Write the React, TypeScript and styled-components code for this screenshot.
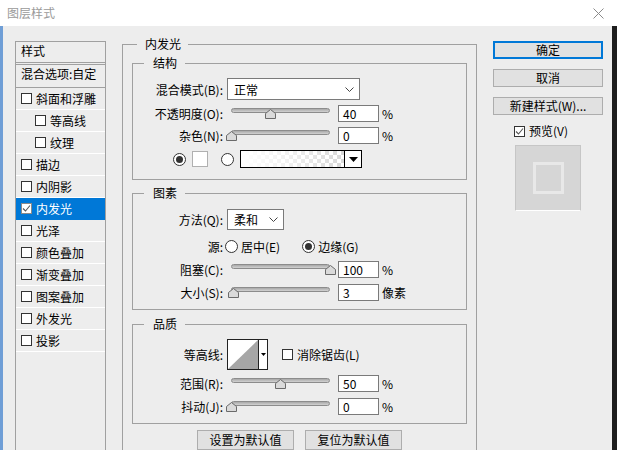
import React from "react";
import styled, { createGlobalStyle } from "styled-components";

const GlobalStyle = createGlobalStyle`
  html, body {
    margin: 0;
    padding: 0;
    background: #ededed;
    overflow: hidden;
  }
  body {
    font-family: "Noto Sans CJK SC", "Noto Sans", sans-serif;
    font-size: 12px;
    color: #000;
  }
`;

type Layer = {
  name: string;
  indent?: boolean;
  checked?: boolean;
  selected?: boolean;
};

const layers: Layer[] = [
  { name: "斜面和浮雕" },
  { name: "等高线", indent: true },
  { name: "纹理", indent: true },
  { name: "描边" },
  { name: "内阴影" },
  { name: "内发光", checked: true, selected: true },
  { name: "光泽" },
  { name: "颜色叠加" },
  { name: "渐变叠加" },
  { name: "图案叠加" },
  { name: "外发光" },
  { name: "投影" },
];

const CheckBox = ({ checked, light }: { checked?: boolean; light?: boolean }) => (
  <Box $light={light}>
    {checked && (
      <svg width="9" height="9" viewBox="0 0 9 9">
        <polyline points="1,4.5 3.5,7 8,1.5" fill="none" stroke="#555" strokeWidth="1.1" />
      </svg>
    )}
  </Box>
);

const Slider = ({ value }: { value: number }) => (
  <SliderWrap>
    <Track />
    <Thumb style={{ left: Math.round((value / 100) * 99 - 5.5) }}>
      <svg width="11" height="10" viewBox="0 0 11 10">
        <polygon points="0.5,9.5 0.5,4.5 5.5,0.5 10.5,4.5 10.5,9.5" fill="#dadada" stroke="#6a6a6a" />
      </svg>
    </Thumb>
  </SliderWrap>
);

const Chevron = () => (
  <svg width="9" height="5" viewBox="0 0 9 5">
    <polyline points="0.5,0.5 4.5,4.5 8.5,0.5" fill="none" stroke="#444" strokeWidth="1" />
  </svg>
);

const SliderRow = ({
  label,
  value,
  unit,
  mt,
}: {
  label: string;
  value: number;
  unit: string;
  mt?: number;
}) => (
  <Row $h={22} $mt={mt}>
    <Label>{label}</Label>
    <Slider value={value} />
    <NumInput>{value}</NumInput>
    <Unit>{unit}</Unit>
  </Row>
);

export default function App() {
  return (
    <Window>
      <GlobalStyle />
      <TitleBar>
        <span>图层样式</span>
        <svg width="11" height="11" viewBox="0 0 11 11">
          <path d="M0.5 0.5 L10.5 10.5 M10.5 0.5 L0.5 10.5" stroke="#8a8a8a" strokeWidth="1" />
        </svg>
      </TitleBar>
      <Body>
        <StyleList>
          <ListHeader>样式</ListHeader>
          <BlendRow>混合选项:自定</BlendRow>
          {layers.map((l) => (
            <ListItem key={l.name} $selected={l.selected} $indent={l.indent}>
              <CheckBox checked={l.checked} light={l.selected} />
              <span>{l.name}</span>
            </ListItem>
          ))}
        </StyleList>

        <MainSet>
          <MainLegend>内发光</MainLegend>

          <SubSet $mt={0} $pb={7}>
            <SubLegend>结构</SubLegend>
            <Row $h={22}>
              <Label>混合模式(B):</Label>
              <Select $w={133} $h={22}>
                <span>正常</span>
                <Chevron />
              </Select>
            </Row>
            <SliderRow label="不透明度(O):" value={40} unit="%" mt={2} />
            <SliderRow label="杂色(N):" value={0} unit="%" />
            <Row $h={26}>
              <ColorRow>
                <Radio $on />
                <Swatch />
                <Radio />
                <GradientBox>
                  <GradFill />
                  <GradArrow>
                    <svg width="9" height="5" viewBox="0 0 9 5">
                      <polygon points="0,0 9,0 4.5,5" fill="#000" />
                    </svg>
                  </GradArrow>
                </GradientBox>
              </ColorRow>
            </Row>
          </SubSet>

          <SubSet $mt={5} $pb={6}>
            <SubLegend>图素</SubLegend>
            <Row $h={22}>
              <Label>方法(Q):</Label>
              <Select $w={57} $h={21}>
                <span>柔和</span>
                <Chevron />
              </Select>
            </Row>
            <Row $h={22} $mt={5}>
              <Label>源:</Label>
              <RadioOption $gap={2}>
                <Radio />
                <span>居中(E)</span>
              </RadioOption>
              <RadioOption $gap={22}>
                <Radio $on />
                <span>边缘(G)</span>
              </RadioOption>
            </Row>
            <SliderRow label="阻塞(C):" value={100} unit="%" mt={1} />
            <SliderRow label="大小(S):" value={3} unit="像素" mt={1} />
          </SubSet>

          <SubSet $mt={6} $pb={6}>
            <SubLegend>品质</SubLegend>
            <Row $h={31}>
              <Label>等高线:</Label>
              <ContourBox>
                <svg width="30" height="29" viewBox="0 0 30 29">
                  <rect width="30" height="29" fill="#fff" />
                  <polygon points="0,29 30,0 30,29" fill="#a6a6a6" />
                </svg>
                <ContourArrow>
                  <svg width="5" height="3" viewBox="0 0 5 3">
                    <polygon points="0,0 5,0 2.5,3" fill="#000" />
                  </svg>
                </ContourArrow>
              </ContourBox>
              <AntiAlias>
                <CheckBox />
                <span>消除锯齿(L)</span>
              </AntiAlias>
            </Row>
            <SliderRow label="范围(R):" value={50} unit="%" mt={2} />
            <SliderRow label="抖动(J):" value={0} unit="%" mt={1} />
          </SubSet>

          <DefaultRow>
            <PlainButton>设置为默认值</PlainButton>
            <PlainButton>复位为默认值</PlainButton>
          </DefaultRow>
        </MainSet>

        <Side>
          <DlgButton $primary>确定</DlgButton>
          <DlgButton>取消</DlgButton>
          <DlgButton>新建样式(W)...</DlgButton>
          <PreviewCheck>
            <CheckBox checked />
            <span>预览(V)</span>
          </PreviewCheck>
          <Preview>
            <PreviewRing />
          </Preview>
        </Side>
      </Body>
    </Window>
  );
}

const Window = styled.div`
  width: 617px;
  height: 450px;
  display: flex;
  flex-direction: column;
  overflow: hidden;
`;

const TitleBar = styled.div`
  height: 26px;
  flex-shrink: 0;
  background: #fff;
  color: #9a9a9a;
  display: flex;
  align-items: center;
  justify-content: space-between;
  padding: 0 13px 0 7px;
  line-height: 16px;
`;

const Body = styled.div`
  flex: 1;
  display: flex;
  align-items: flex-start;
  background: #ededed;
  border-left: 3px solid #6f9ed6;
  border-right: 5px solid #1e1e1e;
  overflow: hidden;
`;

const StyleList = styled.div`
  margin: 15px 0 0 12px;
  width: 91px;
  height: 430px;
  flex-shrink: 0;
  box-sizing: border-box;
  border: 1px solid #a0a0a0;
`;

const ListHeader = styled.div`
  height: 20px;
  line-height: 18px;
  padding-left: 5px;
  border-bottom: 3px double #a0a0a0;
`;

const BlendRow = styled.div`
  height: 22px;
  line-height: 18px;
  padding-left: 5px;
  white-space: nowrap;
  border-bottom: 1px solid #a0a0a0;
`;

const ListItem = styled.div<{ $selected?: boolean; $indent?: boolean }>`
  height: 21px;
  display: flex;
  align-items: center;
  gap: 4px;
  padding-left: ${(p) => (p.$indent ? 19 : 5)}px;
  white-space: nowrap;
  background: ${(p) => (p.$selected ? "#0078d7" : "transparent")};
  color: ${(p) => (p.$selected ? "#fff" : "#000")};
  border-bottom: 1px solid ${(p) => (p.$selected ? "#0078d7" : "#fff")};
`;

const Box = styled.span<{ $light?: boolean }>`
  width: 11px;
  height: 11px;
  box-sizing: border-box;
  flex-shrink: 0;
  border: 1px solid ${(p) => (p.$light ? "#8a8a8a" : "#333")};
  background: #fff;
  display: inline-flex;
  align-items: center;
  justify-content: center;
`;

const MainSet = styled.fieldset`
  margin: 10px 0 0 16px;
  width: 355px;
  flex-shrink: 0;
  min-width: 0;
  box-sizing: border-box;
  border: 1px solid #a0a0a0;
  padding: 3px 9px 20px;
`;

const MainLegend = styled.legend`
  margin-left: 5px;
  padding: 0 7px 0 8px;
  line-height: 16px;
`;

const SubSet = styled.fieldset<{ $mt: number; $pb: number }>`
  margin: ${(p) => p.$mt}px 0 0;
  min-width: 0;
  border: 1px solid #a0a0a0;
  padding: 7px 0 ${(p) => p.$pb}px;
`;

const SubLegend = styled.legend`
  margin-left: 11px;
  padding: 0 8px 0 9px;
  line-height: 16px;
`;

const Row = styled.div<{ $h: number; $mt?: number }>`
  display: flex;
  align-items: center;
  height: ${(p) => p.$h}px;
  margin-top: ${(p) => p.$mt ?? 0}px;
  white-space: nowrap;
`;

const Label = styled.span`
  width: 90px;
  flex-shrink: 0;
  text-align: right;
`;

const Select = styled.div<{ $w: number; $h: number }>`
  margin-left: 4px;
  width: ${(p) => p.$w}px;
  height: ${(p) => p.$h}px;
  box-sizing: border-box;
  border: 1px solid #7a7a7a;
  background: #fff;
  display: flex;
  align-items: center;
  justify-content: space-between;
  padding: 0 5px 0 6px;
`;

const SliderWrap = styled.div`
  position: relative;
  margin-left: 8px;
  width: 99px;
  height: 11px;
  flex-shrink: 0;
`;

const Track = styled.div`
  height: 5px;
  box-sizing: border-box;
  border-radius: 3px;
  border: 1px solid #8c8c8c;
  background: linear-gradient(to bottom, #a8a8a8, #d2d2d2);
`;

const Thumb = styled.div`
  position: absolute;
  top: 1px;
  width: 11px;
  height: 10px;
  display: flex;
`;

const NumInput = styled.div`
  margin-left: 8px;
  width: 41px;
  height: 17px;
  box-sizing: border-box;
  border: 1px solid #7a7a7a;
  background: #fff;
  padding-left: 4px;
  line-height: 15px;
`;

const Unit = styled.span`
  margin-left: 3px;
`;

const ColorRow = styled.div`
  display: flex;
  align-items: center;
  margin-left: 40px;
`;

const Radio = styled.span<{ $on?: boolean }>`
  width: 13px;
  height: 13px;
  box-sizing: border-box;
  flex-shrink: 0;
  border: 1px solid #333;
  border-radius: 50%;
  background: #fff;
  display: inline-flex;
  align-items: center;
  justify-content: center;
  &::after {
    content: "";
    width: 7px;
    height: 7px;
    border-radius: 50%;
    background: ${(p) => (p.$on ? "#333" : "transparent")};
  }
`;

const Swatch = styled.span`
  margin: 0 13px 0 6px;
  width: 16px;
  height: 16px;
  box-sizing: border-box;
  border: 1px solid #b0b0b0;
  background: #fff;
`;

const GradientBox = styled.div`
  margin-left: 6px;
  width: 122px;
  height: 18px;
  box-sizing: border-box;
  border: 1px solid #000;
  display: flex;
`;

const GradFill = styled.div`
  flex: 1;
  background:
    linear-gradient(to right, #fff 0%, rgba(255, 255, 255, 0.6) 50%, rgba(255, 255, 255, 0) 100%),
    repeating-conic-gradient(#d8d8d8 0 25%, #fff 0 50%) 0 0 / 8px 8px;
`;

const GradArrow = styled.div`
  width: 16px;
  border-left: 1px solid #000;
  background: #fff;
  display: flex;
  align-items: center;
  justify-content: center;
`;

const RadioOption = styled.label<{ $gap: number }>`
  display: flex;
  align-items: center;
  gap: 3px;
  margin-left: ${(p) => p.$gap}px;
`;

const ContourBox = styled.div`
  margin-left: 4px;
  width: 41px;
  height: 31px;
  box-sizing: border-box;
  border: 1px solid #222;
  display: flex;
  background: #fff;
`;

const ContourArrow = styled.div`
  flex: 1;
  border-left: 1px solid #222;
  display: flex;
  align-items: center;
  justify-content: center;
`;

const AntiAlias = styled.label`
  display: flex;
  align-items: center;
  gap: 4px;
  margin-left: 14px;
`;

const DefaultRow = styled.div`
  display: flex;
  justify-content: center;
  gap: 11px;
  margin-top: 6px;
`;

const PlainButton = styled.div`
  width: 97px;
  height: 20px;
  box-sizing: border-box;
  border: 1px solid #adadad;
  background: #e1e1e1;
  text-align: center;
  line-height: 18px;
`;

const Side = styled.div`
  margin: 15px 0 0 16px;
  width: 110px;
  flex-shrink: 0;
  display: flex;
  flex-direction: column;
`;

const DlgButton = styled.div<{ $primary?: boolean }>`
  height: 18px;
  box-sizing: border-box;
  border: ${(p) => (p.$primary ? "2px solid #0078d7" : "1px solid #adadad")};
  background: #e1e1e1;
  text-align: center;
  line-height: ${(p) => (p.$primary ? 14 : 16)}px;
  white-space: nowrap;
  & + & {
    margin-top: 10px;
  }
`;

const PreviewCheck = styled.label`
  margin-top: 10px;
  height: 12px;
  padding-left: 21px;
  display: flex;
  align-items: center;
  gap: 4px;
  line-height: 12px;
`;

const Preview = styled.div`
  margin: 8px 0 0 22px;
  width: 66px;
  height: 66px;
  box-sizing: border-box;
  border: 1px solid #c6c6c6;
  border-bottom-color: #fff;
  background: #d6d6d6;
  display: flex;
  align-items: center;
  justify-content: center;
`;

const PreviewRing = styled.div`
  width: 31px;
  height: 32px;
  box-sizing: border-box;
  border: 3px solid #e8e8e8;
`;
